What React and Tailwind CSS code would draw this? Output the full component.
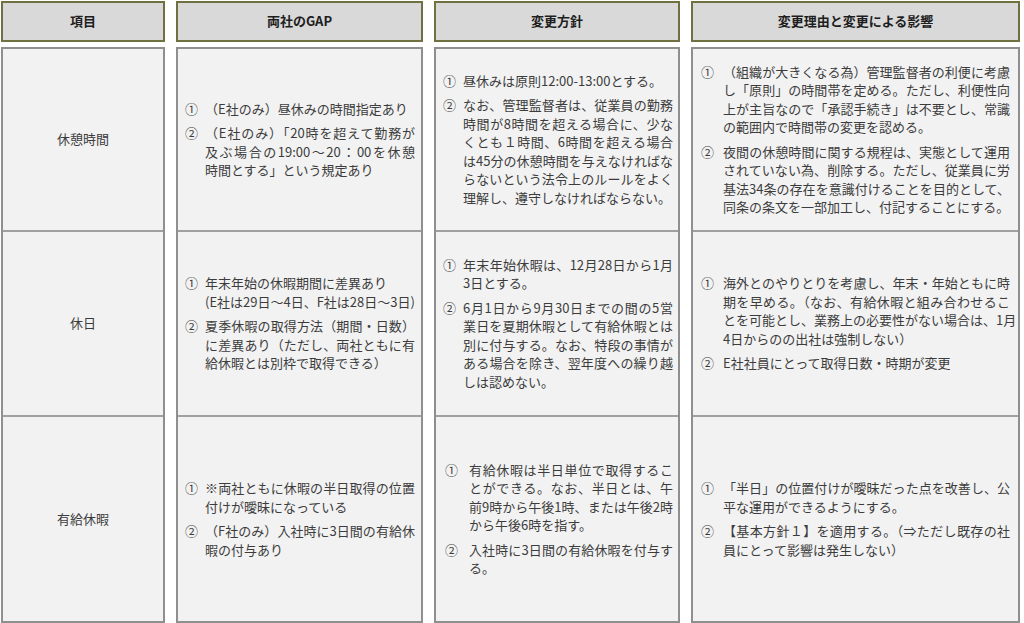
import React from 'react';

const columns = [
  { title: '項目', width: 'w-[164px]' },
  { title: '両社のGAP', width: 'w-[247px]' },
  { title: '変更方針', width: 'w-[246px]' },
  { title: '変更理由と変更による影響', width: 'w-[329px]' },
];

// rows 2 and 3 include the 2px divider line
const rowHeights = ['h-[183px]', 'h-[185px]', 'h-[204px]'];

// each cell: list of items, each item = lines as they wrap in the sheet
// a line given as { t, br: true } is a hard break (not stretched)
const rows = [
  {
    label: '休憩時間',
    gap: [
      ['（E社のみ）昼休みの時間指定あり'],
      ['（E社のみ）「20時を超えて勤務が', '及ぶ場合の19:00～20：00を休憩', '時間とする」という規定あり'],
    ],
    policy: [
      ['昼休みは原則12:00-13:00とする。'],
      [
        'なお、管理監督者は、従業員の勤務',
        '時間が8時間を超える場合に、少な',
        'くとも１時間、6時間を超える場合',
        'は45分の休憩時間を与えなければな',
        'らないという法令上のルールをよく',
        '理解し、遵守しなければならない。',
      ],
    ],
    reason: [
      [
        '（組織が大きくなる為）管理監督者の利便に考慮',
        'し「原則」の時間帯を定める。ただし、利便性向',
        '上が主旨なので「承認手続き」は不要とし、常識',
        'の範囲内で時間帯の変更を認める。',
      ],
      [
        '夜間の休憩時間に関する規程は、実態として運用',
        'されていない為、削除する。ただし、従業員に労',
        '基法34条の存在を意識付けることを目的として、',
        '同条の条文を一部加工し、付記することにする。',
      ],
    ],
  },
  {
    label: '休日',
    gap: [
      [{ t: '年末年始の休暇期間に差異あり', br: true }, '(E社は29日～4日、F社は28日～3日)'],
      ['夏季休暇の取得方法（期間・日数）', 'に差異あり（ただし、両社ともに有', '給休暇とは別枠で取得できる）'],
    ],
    policy: [
      ['年末年始休暇は、12月28日から1月', '3日とする。'],
      [
        '6月1日から9月30日までの間の5営',
        '業日を夏期休暇として有給休暇とは',
        '別に付与する。なお、特段の事情が',
        'ある場合を除き、翌年度への繰り越',
        'しは認めない。',
      ],
    ],
    reason: [
      [
        '海外とのやりとりを考慮し、年末・年始ともに時',
        '期を早める。（なお、有給休暇と組み合わせるこ',
        'とを可能とし、業務上の必要性がない場合は、1月',
        '4日からのの出社は強制しない）',
      ],
      ['E社社員にとって取得日数・時期が変更'],
    ],
  },
  {
    label: '有給休暇',
    gap: [
      ['※両社ともに休暇の半日取得の位置', '付けが曖昧になっている'],
      ['（F社のみ）入社時に3日間の有給休', '暇の付与あり'],
    ],
    policy: [
      ['有給休暇は半日単位で取得するこ', 'とができる。なお、半日とは、午', '前9時から午後1時、または午後2時', 'から午後6時を指す。'],
      ['入社時に3日間の有給休暇を付与す', 'る。'],
    ],
    policyWide: true,
    reason: [
      ['「半日」の位置付けが曖昧だった点を改善し、公', '平な運用ができるようにする。'],
      ['【基本方針１】を適用する。（⇒ただし既存の社', '員にとって影響は発生しない）'],
    ],
  },
];

const marks = ['①', '②', '③'];

const Item = ({ mark, lines, markWidth }) => (
  <div className="flex">
    <span className={`shrink-0 ${markWidth}`}>{mark}</span>
    <div className="min-w-0 flex-1">
      {lines.map((line, i) => {
        const text = typeof line === 'string' ? line : line.t;
        const stretch = i < lines.length - 1 && typeof line === 'string';
        return (
          <div
            key={i}
            className={stretch ? 'whitespace-nowrap [text-align-last:justify]' : 'whitespace-nowrap'}
          >
            {text}
          </div>
        );
      })}
    </div>
  </div>
);

const ItemCell = ({ items, height, padding, markWidth }) => (
  <div className={`flex flex-col justify-center gap-[6px] ${height} ${padding}`}>
    {items.map((lines, i) => (
      <Item key={i} mark={marks[i]} lines={lines} markWidth={markWidth} />
    ))}
  </div>
);

const App = () => {
  return (
    <div className="w-[1024px] h-[623px] overflow-hidden bg-white pl-px pt-px font-['Noto_Sans_CJK_JP','Liberation_Sans',sans-serif] text-[13px] leading-[18.5px] text-[#3c3c3c]">
      <div className="flex gap-[11px]">
        {columns.map((col, ci) => (
          <div key={ci} className={`flex flex-col gap-[5px] ${col.width}`}>
            {/* Header */}
            <div className="flex h-[41px] items-center justify-center border-2 border-[#707040] bg-[#d9d9d9] font-bold text-[#1e1e1e]">
              {col.title}
            </div>

            {/* Body */}
            <div className="divide-y-2 divide-[#a0a0a0] border-2 border-[#8f8f8f] bg-[#f2f2f2]">
              {rows.map((row, ri) => {
                const h = rowHeights[ri];
                if (ci === 0) {
                  return (
                    <div key={ri} className={`flex items-center justify-center ${h}`}>
                      {row.label}
                    </div>
                  );
                }
                if (ci === 1) {
                  return (
                    <ItemCell key={ri} items={row.gap} height={h} padding="pl-[7px] pr-[6px]" markWidth="w-[20px]" />
                  );
                }
                if (ci === 2) {
                  return (
                    <ItemCell
                      key={ri}
                      items={row.policy}
                      height={h}
                      padding={row.policyWide ? 'pl-[9px] pr-[5px]' : 'pl-[7px] pr-[5px]'}
                      markWidth={row.policyWide ? 'w-[24px]' : 'w-[20px]'}
                    />
                  );
                }
                return (
                  <ItemCell key={ri} items={row.reason} height={h} padding="pl-[8px] pr-[8px]" markWidth="w-[22px]" />
                );
              })}
            </div>
          </div>
        ))}
      </div>
    </div>
  );
};

export default App;
